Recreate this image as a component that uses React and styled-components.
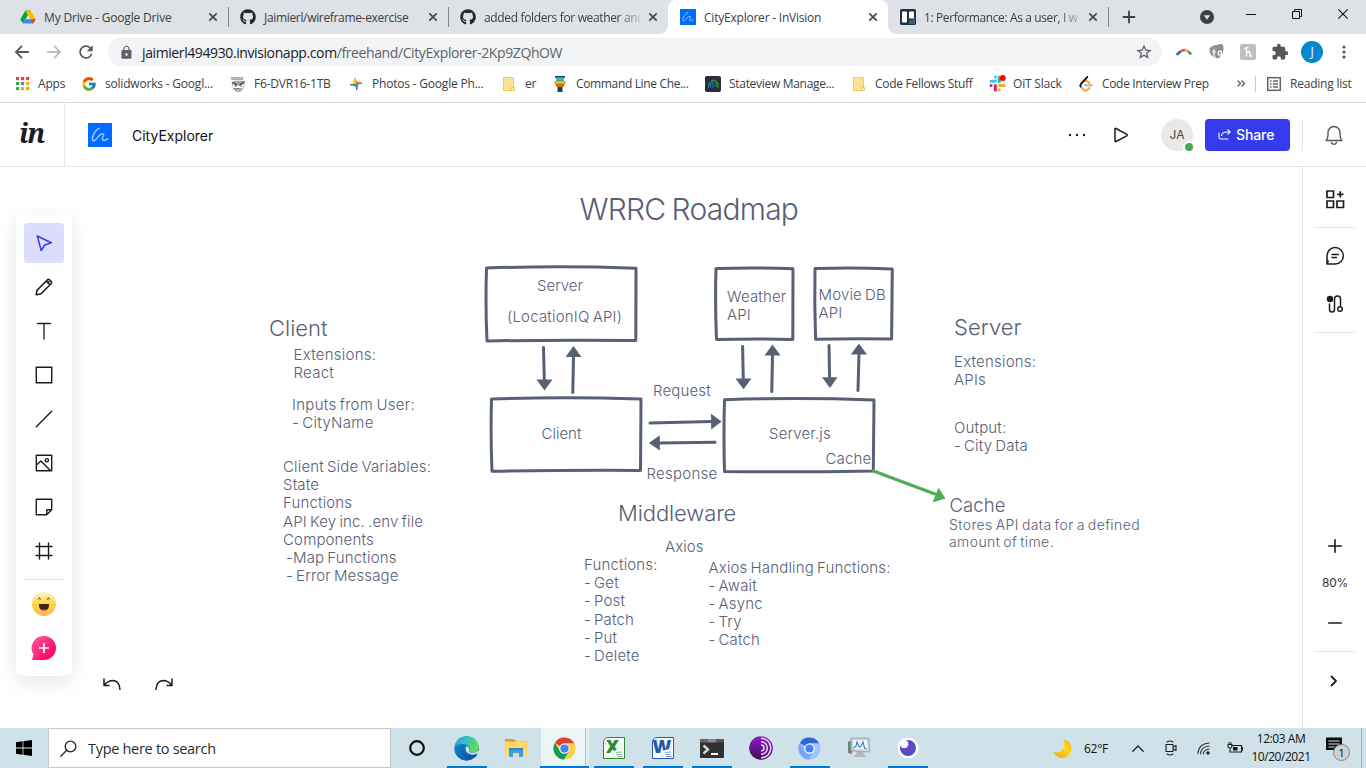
import React from "react";
import styled, { createGlobalStyle } from "styled-components";
import { FaGithub } from "react-icons/fa";
import { FcGoogle } from "react-icons/fc";
import { MdExtension, MdLock, MdRefresh, MdStarBorder } from "react-icons/md";

const UI = `"Open Sans", "Noto Sans", sans-serif`;
const INK = "#586075";

const Global = createGlobalStyle`
  * { box-sizing: border-box; }
  body { margin: 0; overflow: hidden; background: #fff; font-family: ${UI}; }
  svg { display: block; flex: none; overflow: visible; }
`;

const Screen = styled.div`
  width: 1366px;
  height: 768px;
  display: flex;
  flex-direction: column;
  background: #fff;
  overflow: hidden;
`;

/* ---------- browser chrome ---------- */
const TabStrip = styled.div`
  height: 34px;
  flex: none;
  display: flex;
  background: #dee1e6;
  padding-left: 8px;
`;

const Tab = styled.div`
  position: relative;
  width: 220px;
  height: 34px;
  padding: 0 7px 0 12px;
  display: flex;
  align-items: center;
  gap: 4px;
  border-radius: 8px 8px 0 0;
  background: ${(p) => (p.$active ? "#fff" : "transparent")};
  &::before, &::after {
    content: "";
    display: ${(p) => (p.$active ? "block" : "none")};
    position: absolute;
    bottom: 0;
    width: 8px;
    height: 8px;
  }
  &::before { left: -8px; background: radial-gradient(circle at 0 0, transparent 7.5px, #fff 8px); }
  &::after { right: -8px; background: radial-gradient(circle at 100% 0, transparent 7.5px, #fff 8px); }
`;

const TabTitle = styled.span`
  flex: 1;
  min-width: 0;
  margin-left: 4px;
  white-space: nowrap;
  font-size: 12px;
  letter-spacing: ${(p) => p.$ls || 0}px;
  color: #3c4043;
  ${(p) => p.$fade && "mask-image: linear-gradient(90deg, #000 86%, transparent 102%);"}
`;

const TabDivider = styled.i`
  width: 1px;
  height: 20px;
  margin: 7px -1px 0 0;
  background: #80868b;
`;

const NewTab = styled.div`
  display: flex;
  align-items: center;
  margin-left: 15px;
`;

const WindowControls = styled.div`
  display: flex;
  margin-left: auto;
  height: 28px;
  align-items: center;
  & > div { width: 46px; display: flex; justify-content: center; }
  & > div:first-child { width: 42px; padding-top: 5px; }
`;

const Toolbar = styled.div`
  height: 36px;
  flex: none;
  display: flex;
  align-items: center;
  padding-left: 6px;
`;

const ToolSlot = styled.div`
  width: 32px;
  display: flex;
  justify-content: center;
  align-items: center;
`;

const Omnibox = styled.div`
  width: 1054px;
  height: 28px;
  margin: 0 6px;
  padding: 0 9px 0 11px;
  border-radius: 14px;
  background: #f1f3f4;
  display: flex;
  align-items: center;
`;

const Url = styled.span`
  flex: 1;
  margin-left: 8px;
  font-size: 14px;
  letter-spacing: -0.4px;
  white-space: nowrap;
  color: #5f6368;
  b { font-weight: 400; color: #202124; }
`;

const ProfileDot = styled.div`
  width: 22px;
  height: 22px;
  border-radius: 50%;
  background: #0288d1;
  color: #fff;
  font-size: 12px;
  line-height: 21px;
  text-align: center;
`;

const BookmarkBar = styled.div`
  height: 33px;
  flex: none;
  display: flex;
  align-items: center;
  padding: 0 0 5px 14px;
  border-bottom: 1px solid #dadce0;
`;

const Bookmark = styled.div`
  width: ${(p) => p.$w}px;
  display: flex;
  align-items: center;
  gap: 8px;
  white-space: nowrap;
  font-size: 12px;
  letter-spacing: ${(p) => p.$ls || 0}px;
  color: #3c4043;
`;

const IconBox = styled.span`
  width: 16px;
  height: 16px;
  flex: none;
  display: flex;
  align-items: center;
  justify-content: center;
`;

const BookmarkDivider = styled.i`
  width: 1px;
  height: 16px;
  margin-right: 10px;
  background: #c8cacd;
`;

/* ---------- application ---------- */
const Header = styled.header`
  height: 64px;
  flex: none;
  display: flex;
  align-items: center;
  border-bottom: 1px solid #e6e6e6;
  font-family: Inter, sans-serif;
`;

const Brand = styled.div`
  width: 65px;
  height: 63px;
  padding: 0 0 4px 19px;
  display: flex;
  align-items: center;
  border-right: 1px solid #e6e6e6;
  font-family: "Noto Serif", "DejaVu Serif", serif;
  font-style: italic;
  font-weight: 700;
  font-size: 27px;
  letter-spacing: -1.2px;
  color: #1d1d27;
`;

const FileIcon = styled.div`
  margin-left: 23px;
`;

const FileName = styled.div`
  margin-left: 20px;
  padding-top: 2px;
  font-size: 14px;
  letter-spacing: 0;
  color: #111;
`;

const HeaderActions = styled.div`
  margin-left: auto;
  display: flex;
  align-items: center;
  height: 32px;
`;

const PlayButton = styled.div`
  margin-left: 28px;
`;

const Avatar = styled.div`
  position: relative;
  width: 32px;
  height: 32px;
  margin: 0 12px 0 33px;
  border-radius: 50%;
  background: #e9e9e9;
  color: #444;
  font-size: 12px;
  line-height: 32px;
  text-align: center;
`;

const Presence = styled.i`
  position: absolute;
  right: -2px;
  bottom: -2px;
  width: 12px;
  height: 12px;
  border-radius: 50%;
  border: 2px solid #fff;
  background: #43a94d;
`;

const ShareButton = styled.button`
  width: 85px;
  height: 32px;
  padding: 0 0 0 13px;
  border: 0;
  border-radius: 4px;
  background: #343bee;
  color: #fff;
  display: flex;
  align-items: center;
  gap: 5px;
  font: 500 14px Inter, sans-serif;
  letter-spacing: -0.1px;
`;

const BellSlot = styled.div`
  width: 64px;
  height: 32px;
  margin-left: 12px;
  padding-right: 2px;
  border-left: 1px solid #e6e6e6;
  display: flex;
  align-items: center;
  justify-content: center;
`;

const Main = styled.main`
  flex: 1;
  min-height: 0;
  display: flex;
`;

const Canvas = styled.section`
  position: relative;
  flex: 1;
  overflow: hidden;
`;

const Toolbox = styled.div`
  position: absolute;
  left: 16px;
  top: 48px;
  width: 56px;
  padding: 8px;
  display: flex;
  flex-direction: column;
  gap: 4px;
  border-radius: 6px;
  background: #fff;
  box-shadow: 0 6px 20px rgba(0, 0, 0, 0.1);
`;

const Tool = styled.div`
  width: 40px;
  height: 40px;
  border-radius: 4px;
  display: flex;
  align-items: center;
  justify-content: center;
  background: ${(p) => (p.$active ? "#dcdcfc" : "transparent")};
`;

const ToolRule = styled.i`
  height: 1px;
  margin: 4px 0 0;
  background: #e2e2e2;
`;

const History = styled.div`
  position: absolute;
  left: 102px;
  top: 510px;
  height: 13px;
  overflow: hidden;
  display: flex;
  gap: 32px;
  svg { overflow: hidden; }
`;

const Drawing = styled.svg`
  position: absolute;
  inset: 0;
`;

const Label = styled.div`
  position: absolute;
  left: ${(p) => p.$x}px;
  top: ${(p) => p.$y - 167}px;
  white-space: pre;
  font-family: Inter, sans-serif;
  font-weight: 300;
  font-size: ${(p) => p.$size || 15}px;
  line-height: ${(p) => p.$lh || 18.2}px;
  letter-spacing: ${(p) => p.$ls ?? 0.16}px;
  word-spacing: -1.3px;
  color: ${INK};
`;

const Rail = styled.aside`
  width: 64px;
  flex: none;
  border-left: 1px solid #e6e6e6;
  display: flex;
  flex-direction: column;
  align-items: center;
  padding: 8px 0 23px;
  font-family: Inter, sans-serif;
`;

const RailButton = styled.div`
  height: ${(p) => p.$h || 48}px;
  padding-right: ${(p) => p.$pr || 0}px;
  display: flex;
  align-items: center;
  justify-content: center;
`;

const RailRule = styled.i`
  width: 40px;
  height: 1px;
  background: #e2e2e2;
  margin: ${(p) => p.$m || "4px 0"};
`;

const ZoomValue = styled.div`
  height: 36px;
  padding: 12px 0 0 1px;
  line-height: 26px;
  font-size: 12px;
  letter-spacing: -0.2px;
  color: #333;
`;

const Spacer = styled.div`
  flex: 1;
`;

/* ---------- task bar ---------- */
const Taskbar = styled.footer`
  height: 40px;
  flex: none;
  display: flex;
  background: #d0e2e9;
`;

const StartButton = styled.div`
  width: 48px;
  display: flex;
  align-items: center;
  justify-content: center;
`;

const SearchBox = styled.div`
  width: 343px;
  height: 40px;
  padding-left: 11px;
  display: flex;
  align-items: center;
  gap: 11px;
  border: 1px solid #c5c9cb;
  background: #fff;
  font-size: 14.5px;
  letter-spacing: -0.3px;
  color: #2b2b2b;
`;

const TaskItem = styled.div`
  width: ${(p) => p.$w || 49}px;
  display: flex;
  align-items: center;
  justify-content: center;
  background: ${(p) =>
    p.$active
      ? "linear-gradient(90deg, transparent 1px, #edf4f6 1px 45px, #b4c6cd 45px 46px, #dfebef 46px)"
      : "none"};
  box-shadow: ${(p) => (p.$active ? "inset 0 -2px #0078d7" : "none")};
  &::after {
    content: "";
    display: ${(p) => (p.$open ? "block" : "none")};
    width: 40px;
    height: 2px;
    margin: 38px -40px 0 ${(p) => -(40 + (p.$icon || 24)) / 2}px;
    margin-right: ${(p) => ((p.$icon || 24) - 40) / 2}px;
    background: #0078d7;
  }
`;

const Tray = styled.div`
  margin-left: auto;
  display: flex;
  align-items: center;
  color: #111;
  font-size: 12px;
`;

const TraySlot = styled.div`
  width: ${(p) => p.$w}px;
  display: flex;
  align-items: center;
  justify-content: center;
  white-space: nowrap;
  letter-spacing: -0.3px;
`;

const Clock = styled.div`
  width: 66px;
  text-align: center;
  line-height: 18px;
  letter-spacing: -0.45px;
  padding-bottom: 1px;
`;

const DesktopEdge = styled.i`
  width: 5px;
  height: 40px;
  border-left: 1px solid #9fb0b7;
`;

/* ---------- icons ---------- */
const CloseX = ({ size = 8, w = 1.7, c = "#45494d" }) => (
  <svg width={size} height={size} viewBox="0 0 8 8">
    <path d="M.3 .3 7.7 7.7M7.7 .3.3 7.7" stroke={c} strokeWidth={w} />
  </svg>
);

const DriveIcon = () => (
  <svg width="16" height="16" viewBox="0 0 16 16">
    <path d="M5.4 1.4h5.2L8 5.9z" fill="#188038" />
    <path d="M5.4 1.4 0.3 10.2l2.6 4.4L8 5.9z" fill="#00ac47" />
    <path d="M10.6 1.4 15.7 10.2h-5.2L5.4 1.4z" fill="#ffba00" />
    <path d="M5.5 10.2h10.2l-2.6 4.4H2.9z" fill="#4285f4" />
    <path d="M10.5 10.2h5.2l-2.6 4.4z" fill="#ea4335" />
  </svg>
);

const FreehandIcon = ({ size }) => (
  <svg width={size} height={size} viewBox="0 0 24 24">
    <path d="M0 0h24v24H0z" fill="#006cff" />
    <path
      d="M11.300 5.300C7.500 6.500 3.800 13 4.500 16.800c.6 2.200 2.800.6 5-2.200 2-2.700 4.700-4.600 6-3.300 1 1.200-1.900 3.700-1 5.300.8 1.300 3.500.6 5.300-.7"
      fill="none"
      stroke="#9fc8ff"
      strokeWidth="1.500"
      strokeLinecap="round"
      strokeLinejoin="round"
    />
  </svg>
);

const TrelloIcon = () => (
  <svg width="16" height="16" viewBox="0 0 16 16">
    <rect width="16" height="16" rx="1.500" fill="#1c3347" />
    <path d="M9 12l6-3v6H9z" fill="#3d6074" />
    <rect x="2" y="2.500" width="5" height="11" rx=".7" fill="#fff" />
    <rect x="9" y="2.500" width="5" height="7" rx=".7" fill="#fff" />
  </svg>
);

const Arrow = ({ back, c }) => (
  <svg width="14" height="14" viewBox="0 0 14 14" fill="none" stroke={c} strokeWidth="1.800">
    <path d={back ? "M13.800 7H1.500M7 .8.9 7 7 13.200" : "M.2 7h12.300M7 .8 13.100 7 7 13.200"} />
  </svg>
);

const AppsIcon = () => (
  <svg width="13" height="13" viewBox="0 0 13 13">
    {["#ea4335", "#ea4335", "#ea4335", "#34a853", "#4285f4", "#f9ab00", "#34a853", "#f9ab00", "#f9ab00"].map((c, i) => (
      <rect key={i} x={(i % 3) * 5} y={Math.floor(i / 3) * 5} width="3.200" height="3.200" fill={c} />
    ))}
  </svg>
);

const DvrIcon = () => (
  <svg width="16" height="16" viewBox="0 0 16 16">
    <path d="M1 1h12.500v3H1z" fill="#c4c4c4" />
    <path d="M1 1.800h12.500M2 3.600h11" stroke="#888" strokeWidth=".7" strokeDasharray="1.500 1" />
    <path d="M1.500 6 5 4.700h6L15 5l-1 7-4 4H7l-4-3z" fill="#a5a5a5" />
    <path d="M3 8l4 1.500h2L14 8l-1 4-3 1-2 2-2-2-3-1z" fill="#fff" />
    <path d="M2.500 6.500 7 9.200M14 6 9.500 9.200" stroke="#333" strokeWidth="1.200" fill="none" />
    <path d="M4.500 13l1-1 1.200 1.500L8 12l1.200 1.500 1.300-1.500" stroke="#444" strokeWidth=".9" fill="none" />
    <circle cx="5.500" cy="10" r=".8" fill="#a33" />
    <circle cx="11" cy="10" r=".8" fill="#a33" />
  </svg>
);

const PhotosIcon = () => (
  <svg width="16" height="16" viewBox="0 0 16 16">
    <path d="M8 1v7H4.500Q7 6.500 6 3.500z" fill="#fbbc04" />
    <path d="M15 8H8V4.500Q9.500 7 12.500 6z" fill="#ea4335" />
    <path d="M8 15V8h3.500Q9 9.500 10 12.500z" fill="#4285f4" />
    <path d="M1 8h7v3.500Q6.500 9 3.500 10z" fill="#34a853" />
    <path d="M8 1.200 4.500 4.500V8H8zM14.800 8 11.500 4.500H8V8z" fill="#fbbc04" opacity=".35" />
  </svg>
);

const FolderMark = () => (
  <svg width="12" height="14" viewBox="0 0 12 14">
    <path d="M.5.5h10v9l1 1v3H.5z" fill="#fde293" stroke="#f2cc60" />
    <path d="M8.500 13.500v-3h3" fill="#fff1bd" stroke="#e9bd49" strokeWidth=".8" />
  </svg>
);

const TowerIcon = () => (
  <svg width="12" height="16" viewBox="0 0 12 16">
    <path d="M1 0h10v1.800H1z" fill="#0b5b72" />
    <path d="M2 1.800h8v3H2z" fill="#178a94" />
    <path d="M2 3h8" stroke="#bfe" strokeWidth=".7" />
    <path d="M0 5h12v2.500H0z" fill="#f2b51c" />
    <path d="M1 7.500h10L9.500 11h-7z" fill="#b87b08" />
    <path d="M3.500 11h5v5h-5z" fill="#0d4770" />
  </svg>
);

const StateviewIcon = () => (
  <svg width="16" height="16" viewBox="0 0 16 16" fill="none">
    <rect width="16" height="16" rx="2" fill="#2a2d3a" />
    <path d="M3.500 11.500V9q0-2 2-2.500V11.500M6 6q2-1 2 1v4.500" stroke="#2277b5" strokeWidth="1.200" />
    <path d="M6 5q4-2 5 1v5M10 5.500q3 0 3 3v3.500" stroke="#28a428" strokeWidth="1.200" />
  </svg>
);

const SlackIcon = () => (
  <svg width="17" height="17" viewBox="0 0 17 17" strokeWidth="3" strokeLinecap="round">
    <path d="M2 6.200h4.500M6.400 2v.1" stroke="#36c5f0" />
    <path d="M10.400 2v4.500" stroke="#2eb67d" />
    <path d="M10.500 10.400H15M10.400 14.800v-.1" stroke="#ecb22e" />
    <path d="M6.300 10.400v4.500M2 10.400h.1" stroke="#e01e5a" />
    <circle cx="13.800" cy="3" r="2.900" fill="#f00" />
  </svg>
);

const LeetIcon = () => (
  <svg width="14" height="16" viewBox="0 0 14 16" fill="none" strokeLinecap="round" strokeWidth="1.900">
    <path d="M2 8Q1 9.500 2 11l2.500 2.800q2 1.700 4 0L10.500 12" stroke="#ffa116" />
    <path d="M4.700 5.300q2-1.500 3.500 0L10.500 7" stroke="#ffa116" />
    <path d="M8.300 1 1.800 8.200Q1 9.300 1.600 10.500" stroke="#1a1a1a" />
    <path d="M6 9.300h7" stroke="#b3b3b3" />
  </svg>
);

const ReadingIcon = () => (
  <svg width="14" height="14" viewBox="0 0 14 14" fill="none" stroke="#5f6368" strokeWidth="1.500">
    <rect x=".7" y=".7" width="12.600" height="12.600" />
    <path d="M3 4h1.500M3 7h1.500M3 10h1.500M6 4h5M6 7h5M6 10h5" />
  </svg>
);

const S = (p) => (
  <svg width={p.s || 18} height={p.h || p.s || 18} viewBox={`0 0 ${p.s || 18} ${p.h || p.s || 18}`} fill="none" stroke={p.c || "#1d1d1f"} strokeWidth={p.w || 1.4} strokeLinecap="round" strokeLinejoin="round">
    {p.children}
  </svg>
);

const Emoji = () => (
  <svg width="24" height="24" viewBox="0 0 24 24">
    <defs>
      <linearGradient id="face" x1="0" y1="0" x2="0" y2="1">
        <stop offset="0" stopColor="#fff3cf" />
        <stop offset=".5" stopColor="#ffd43b" />
        <stop offset="1" stopColor="#ffb36b" />
      </linearGradient>
    </defs>
    <circle cx="12" cy="12" r="12" fill="url(#face)" />
    <path d="M6.300 7.500 7.400 5.700 8.500 7.500M15.300 7.500l1.100-1.800 1.100 1.800" stroke="#5d4218" strokeWidth="1" fill="none" />
    <path d="M7 12h10q.3 6.500-5 6.500T7 12z" fill="#3d2610" />
    <path d="M9.500 17.800q2.500-1.800 5 0-2.500 1.400-5 0z" fill="#f0156e" />
  </svg>
);

const PinkBubble = () => (
  <svg width="24" height="24" viewBox="0 0 24 24">
    <defs>
      <linearGradient id="pink" x1="0" y1="0" x2="1" y2="1">
        <stop offset="0" stopColor="#ff5fa3" />
        <stop offset=".75" stopColor="#fb0b6a" />
      </linearGradient>
    </defs>
    <path d="M12 0a12 12 0 1 1 0 24H0l1.500-5.500A12 12 0 0 1 12 0z" fill="url(#pink)" />
    <path d="M12 7v10M7 12h10" stroke="#fff" strokeWidth="1.600" />
  </svg>
);

const ChromeIcon = ({ mono, size = 23 }) => {
  const [r, g, y] = mono ? ["#2f63d6", "#77a6f7", "#a3c4fb"] : ["#db4437", "#0f9d58", "#ffcd40"];
  return (
    <svg width={size} height={size} viewBox="0 0 24 24">
      <circle cx="12" cy="12" r="11.500" fill={y} />
      <path d="M12 12 2 6.200A11.500 11.500 0 0 1 22 6.500H12z" fill={r} />
      <path d="M2 6.200A11.500 11.500 0 0 0 11.500 23.500L16.800 14.700 12 12 7.200 14.700z" fill={g} />
      <circle cx="12" cy="12" r="5.500" fill={mono ? "#fff" : "#f1f1f1"} />
      <circle cx="12" cy="12" r="4.300" fill="#4285f4" />
    </svg>
  );
};

const EdgeIcon = () => (
  <svg width="25" height="25" viewBox="0 0 24 24">
    <defs>
      <linearGradient id="edgeTop" x1="0" y1="0" x2="1" y2=".4">
        <stop offset="0" stopColor="#249fe0" />
        <stop offset=".5" stopColor="#2fc2c6" />
        <stop offset="1" stopColor="#65dc52" />
      </linearGradient>
      <linearGradient id="edgeLow" x1="0" y1="0" x2="1" y2="1">
        <stop offset="0" stopColor="#1593df" />
        <stop offset="1" stopColor="#0b4d98" />
      </linearGradient>
    </defs>
    <circle cx="12" cy="12" r="11.700" fill="url(#edgeLow)" />
    <path d="M.5 10.500C1.500 4 6.500.3 12 .3c7 0 11.800 4.700 11.700 10 0 4-3 5.800-6 5.800-2.500 0-3.700-.8-3.500-1.700 1.300-1 1.300-5.400-3.700-6.400C6 7 2 8 .5 10.500z" fill="url(#edgeTop)" />
    <path d="M10 8.500c-3 1.800-3 7 .5 9.800 3 2.300 7.500 2.200 12 -.8-.6 1-1.200 1.800-2 2.500C14 22.500 7 20 7 14c0-3 1.500-5 3-5.500z" fill="#0c3f8a" opacity=".55" />
    <path d="M12 9.500c2.300.6 3.200 3.200 2.200 4.900-.3 1 1 1.700 3.500 1.700 2.300 0 4.300-.9 5.500-2.500.6 1.300.3 2.500-.4 3.300-4 2-9 1-10.800-1.700-1-1.500-1.200-4 0-5.700z" fill="#d0e2e9" />
  </svg>
);

const ExplorerIcon = () => (
  <svg width="22" height="20" viewBox="0 0 22 20">
    <path d="M0 1h9l2 2h11v15H0z" fill="#f5b50a" />
    <path d="M0 3.500h22V18H0z" fill="#ffd667" />
    <path d="M0 3.500h10l1-1.500H9L8 1H0z" fill="#e09f0b" />
    <path d="M4 10h14v9h-4v-4H8v4H4z" fill="#3d9de0" />
    <path d="M4 10h14v2H4z" fill="#2b86cb" />
  </svg>
);

const Sheet = styled.div`
  position: relative;
  width: 22px;
  height: 22px;
  border: 1px solid ${(p) => p.$c};
  border-top-left-radius: 5px;
  background: linear-gradient(135deg, ${(p) => p.$tint}, #fff 45%, ${(p) => p.$tint});
  box-shadow: inset 0 0 0 1px #fff;
  color: ${(p) => p.$c};
  font: 800 18px/17px ${UI};
  padding-right: 2px;
  text-align: center;
  & > svg { position: absolute; right: 0; bottom: 0; }
`;

const OfficeIcon = ({ letter, c, tint }) => (
  <Sheet $c={c} $tint={tint}>
    {letter}
    <svg width="11" height="9" viewBox="0 0 11 9">
      <path d="M0 2 7 0l4 2v7H3z" fill="#fff" />
      <path d="M3 3.500 9 3M3 5.500h6M4 7.500h6" stroke={c} strokeWidth=".6" />
    </svg>
  </Sheet>
);

const TerminalIcon = () => (
  <svg width="24" height="19" viewBox="0 0 24 19">
    <rect width="24" height="19" rx="1" fill="#303030" />
    <path d="M0 1q0-1 1-1h7v3.500H0z" fill="#686868" />
    <path d="M8 0h8v3.500H8z" fill="#8a8a8a" />
    <path d="M16 0h7q1 0 1 1v2.500h-8z" fill="#555" />
    <path d="M3.500 6.500 8 10.500l-4.500 4" stroke="#d4d4d4" strokeWidth="2.400" fill="none" />
    <path d="M11 15h7" stroke="#fff" strokeWidth="2" />
  </svg>
);

const TorIcon = () => (
  <svg width="24" height="24" viewBox="0 0 24 24" fill="none">
    <defs>
      <linearGradient id="tor" x1="0" y1="0" x2="0" y2="1">
        <stop offset="0" stopColor="#8e1bc6" />
        <stop offset="1" stopColor="#420c5d" />
      </linearGradient>
    </defs>
    <circle cx="12" cy="12" r="11.800" fill="url(#tor)" />
    <path d="M12 2.200a9.800 9.800 0 0 1 0 19.600M12 5.700a6.300 6.300 0 0 1 0 12.600M12 9a3 3 0 0 1 0 6" stroke="#ecd6f7" strokeWidth="1.500" />
  </svg>
);

const MonitorIcon = () => (
  <svg width="24" height="22" viewBox="0 0 24 22">
    <path d="M1 5 5 3v14l-4-1z" fill="#777f83" />
    <path d="M1 7h3M1 9h3" stroke="#39b54a" />
    <path d="M4 1h18l1 14-19-1z" fill="#c9cdcf" stroke="#8d9498" strokeWidth=".6" />
    <path d="M6 3h14l.7 10L6 12z" fill="#eaf5fc" />
    <path d="M6.500 11 9 9l1-4 2 5 2-1 2-4 1.500 6 2 1" stroke="#2f86bd" strokeWidth="1.100" fill="none" />
    <path d="M10 15h6l3 5H7z" fill="#b1b6b8" />
  </svg>
);

const EyeIcon = () => (
  <svg width="22" height="22" viewBox="0 0 22 22">
    <circle cx="11" cy="11" r="10.500" fill="#fff" />
    <circle cx="11" cy="11" r="8" fill="#5a4ac4" />
    <circle cx="7.200" cy="7" r="4.200" fill="#fff" />
  </svg>
);

/* ---------- diagram ---------- */
const boxes = [
  "M486.500 268Q561 265.500 636 268.300 L635.800 340.500 Q560 339.600 487 341 Q485.300 305 486.500 268Z",
  "M716 268.600 Q755 267.300 793 268.800 L792.800 339.400 Q755 338.400 716.500 339.500 Q715 305 716 268.600Z",
  "M815 268.600 Q852 267.300 892.300 268.900 L891.600 339 Q854 338.300 815.600 339.200 Q814.300 304 815 268.600Z",
  "M491.500 399 Q562 396.500 641 399 L640.500 470.400 Q565 470 492 471.200 Q490.500 437 491.500 399Z",
  "M724.500 399.700 Q798 397.300 874 400 L873.300 471 Q800 472.300 724.500 471.600 Q723.500 436 724.500 399.700Z",
];

const arrows = [
  { line: "M543.500 347.500 544.300 381", head: "M536.500 379.500H552.500L544.500 390.500Z" },
  { line: "M572.800 392.500 573.500 355", head: "M565.500 357H581.500L573.500 346Z" },
  { line: "M742.600 346.500 743.300 380", head: "M735.500 378.500H751.500L743.500 389.300Z" },
  { line: "M771.800 391.500 772.500 354", head: "M764.500 355.500H780.500L772.500 344.500Z" },
  { line: "M829 345.500 829.600 379", head: "M822 377.200H837.500L830 388Z" },
  { line: "M858 390.500 859 353", head: "M850.800 354.500H867L859 343.500Z" },
  { line: "M650 423 712 421.600", head: "M711 413.800 721.700 421.400 711.200 429.500Z" },
  { line: "M715 442.200 658 443", head: "M659.800 435.200V450.500L649 443Z" },
];

const Diagram = () => (
  <Drawing width="1302" height="561" viewBox="0 167 1302 561" fill="none">
    <g stroke={INK} strokeWidth="3" strokeLinejoin="round" strokeLinecap="round">
      {boxes.map((d) => <path key={d} d={d} />)}
      {arrows.map((a) => <path key={a.line} d={a.line} />)}
    </g>
    <g fill={INK}>
      {arrows.map((a) => <path key={a.head} d={a.head} />)}
    </g>
    <path d="M873.500 471 935 494" stroke="#4caf50" strokeWidth="3" strokeLinecap="round" />
    <path d="M938.500 487.800 945.500 498.600 932.500 502.600Z" fill="#4caf50" />
  </Drawing>
);

const labels = [
  { x: 579.5, y: 191, size: 30, lh: 36, ls: -0.78, t: "WRRC Roadmap" },
  { x: 269, y: 314, size: 22, lh: 28, ls: 0, t: "Client" },
  { x: 293.5, y: 346, ls: 0.25, t: "Extensions:\nReact" },
  { x: 292, y: 395.5, ls: 0.3, t: "Inputs from User:\n- CityName" },
  { x: 283, y: 458, t: "Client Side Variables:\nState\nFunctions\nAPI Key inc. .env file\nComponents\n -Map Functions\n - Error Message" },
  { x: 537, y: 276.5, ls: 0, t: "Server" },
  { x: 507, y: 308, ls: 0.2, t: "(LocationIQ API)" },
  { x: 727, y: 288, t: "Weather\nAPI" },
  { x: 818.5, y: 286, t: "Movie DB\nAPI" },
  { x: 653, y: 382, t: "Request" },
  { x: 541.5, y: 424.5, ls: 0, t: "Client" },
  { x: 769, y: 425, t: "Server.js" },
  { x: 825.5, y: 450, t: "Cache" },
  { x: 646.5, y: 464.5, ls: 0.25, t: "Response" },
  { x: 618, y: 499, size: 22, lh: 28, ls: -0.1, t: "Middleware" },
  { x: 665, y: 537.5, ls: 0.05, t: "Axios" },
  { x: 584, y: 556, t: "Functions:\n- Get\n- Post\n- Patch\n- Put\n- Delete" },
  { x: 708.5, y: 558.5, t: "Axios Handling Functions:\n- Await\n- Async\n- Try\n- Catch" },
  { x: 954, y: 312.5, size: 22, lh: 28, ls: 0, t: "Server" },
  { x: 954, y: 353, ls: 0.2, t: "Extensions:\nAPIs" },
  { x: 954, y: 419, t: "Output:\n- City Data" },
  { x: 949.5, y: 491.5, size: 18.5, lh: 26, ls: 0.1, t: "Cache" },
  { x: 949, y: 516, size: 14, lh: 17, ls: 0.4, t: "Stores API data for a defined\namount of time." },
];

const tabs = [
  { icon: <DriveIcon />, t: "My Drive - Google Drive", ls: -0.16, div: true },
  { icon: <FaGithub size={16} color="#24292e" />, t: "Jaimierl/wireframe-exercise", ls: -0.33, div: true },
  { icon: <FaGithub size={16} color="#24292e" />, t: "added folders for weather and", ls: -0.35, fade: true },
  { icon: <FreehandIcon size={16} />, t: "CityExplorer - InVision", ls: -0.22, active: true },
  { icon: <TrelloIcon />, t: "1: Performance: As a user, I w", ls: -0.38, fade: true, div: true },
];

const bookmarks = [
  { w: 67, icon: <AppsIcon />, t: "Apps" },
  { w: 149, icon: <FcGoogle size={16} />, t: "solidworks - Googl..." },
  { w: 118, icon: <DvrIcon />, t: "F6-DVR16-1TB" },
  { w: 153, icon: <PhotosIcon />, t: "Photos - Google Ph..." },
  { w: 51, icon: <FolderMark />, t: "er" },
  { w: 153, icon: <TowerIcon />, t: "Command Line Che...", ls: -0.35 },
  { w: 146, icon: <StateviewIcon />, t: "Stateview Manage...", ls: -0.3 },
  { w: 138, icon: <FolderMark />, t: "Code Fellows Stuff", ls: -0.28 },
  { w: 89, icon: <SlackIcon />, t: "OiT Slack" },
  { w: 159, icon: <LeetIcon />, t: "Code Interview Prep", ls: -0.33 },
];

export default function App() {
  return (
    <Screen>
      <Global />
      <TabStrip>
        {tabs.map((tab) => (
          <React.Fragment key={tab.t}>
            <Tab $active={tab.active}>
              <IconBox>{tab.icon}</IconBox>
              <TabTitle $ls={tab.ls} $fade={tab.fade}>{tab.t}</TabTitle>
              <IconBox><CloseX /></IconBox>
            </Tab>
            {tab.div && <TabDivider />}
          </React.Fragment>
        ))}
        <NewTab>
          <S s={12} w={1.8} c="#3c4043"><path d="M6 .5v11M.5 6h11" /></S>
        </NewTab>
        <WindowControls>
          <div>
            <svg width="14" height="14" viewBox="0 0 14 14">
              <circle cx="7" cy="7" r="7" fill="#3c4043" />
              <path d="M3.800 5.300h6.400L7 9.800z" fill="#dee1e6" />
            </svg>
          </div>
          <div><svg width="10" height="1"><path d="M0 .5h10" stroke="#111" /></svg></div>
          <div>
            <svg width="10" height="10" fill="none" stroke="#111">
              <path d="M.5 2.500h7v7h-7zM2.500 2.500v-2h7v7h-2" />
            </svg>
          </div>
          <div><CloseX size={10} w={0.9} c="#111" /></div>
        </WindowControls>
      </TabStrip>

      <Toolbar>
        <ToolSlot><Arrow back c="#54585c" /></ToolSlot>
        <ToolSlot><Arrow c="#babcbe" /></ToolSlot>
        <ToolSlot><MdRefresh size={20} color="#54585c" /></ToolSlot>
        <Omnibox>
          <MdLock size={15} color="#5f6368" />
          <Url><b>jaimierl494930.invisionapp.com</b>/freehand/CityExplorer-2Kp9ZQhOW</Url>
          <MdStarBorder size={18} color="#54585c" />
        </Omnibox>
        <ToolSlot>
          <svg width="16" height="8" viewBox="0 0 16 8" fill="none" strokeWidth="2.600">
            <path d="M.8 7Q2.500 4.500 5 3.300" stroke="#2b64b8" />
            <path d="M5 3.300Q6.500 2 9 2" stroke="#e34b3a" />
            <path d="M8.500 2q2 0 4 1.500" stroke="#f4a12c" />
            <path d="M12.300 3.500q1.500 1 2.800 3" stroke="#2e9d57" />
          </svg>
        </ToolSlot>
        <ToolSlot>
          <svg width="15" height="16" viewBox="0 0 15 16">
            <path d="M1 9C-1 3 4 1 8 1q4-2 6 0 2 8-4 13-6 1-9-5z" fill="#8f9092" />
            <path d="M5 5v7q0 1.500 1.500 1M3 8h4M9.500 11Q8.500 8 10.500 7q2-.3 2 2t-3 2M12.500 7v5q-.5 3-2.500 2" stroke="#fff" strokeWidth="1.200" fill="none" />
          </svg>
        </ToolSlot>
        <ToolSlot>
          <svg width="16" height="16" viewBox="0 0 16 16" fill="none">
            <rect width="16" height="16" rx="2" fill="#bfbfbf" />
            <path d="M6.500 3v9.500M4.300 4.800 8.500 3.500M6.500 9Q9.500 6 9.800 8.500V12q.7.800 2-.5" stroke="#fff" strokeWidth="1.400" />
          </svg>
        </ToolSlot>
        <ToolSlot><MdExtension size={18} color="#54585c" /></ToolSlot>
        <ToolSlot><ProfileDot>J</ProfileDot></ToolSlot>
        <ToolSlot>
          <svg width="4" height="14" fill="#54585c"><circle cx="2" cy="2" r="1.600" /><circle cx="2" cy="7" r="1.600" /><circle cx="2" cy="12" r="1.600" /></svg>
        </ToolSlot>
      </Toolbar>

      <BookmarkBar>
        {bookmarks.map((b, i) => (
          <Bookmark key={i} $w={b.w} $ls={b.ls || -0.2}><IconBox>{b.icon}</IconBox>{b.t}</Bookmark>
        ))}
        <Bookmark $w={18}>
          <svg width="8" height="7" viewBox="0 0 8 7" fill="none" stroke="#5f6368" strokeWidth="1.400"><path d="M.5.5l3 3-3 3M4.500.5l3 3-3 3" /></svg>
        </Bookmark>
        <BookmarkDivider />
        <Bookmark $w={90} $ls={-0.22}><IconBox><ReadingIcon /></IconBox>Reading list</Bookmark>
      </BookmarkBar>

      <Header>
        <Brand>in</Brand>
        <FileIcon><FreehandIcon size={24} /></FileIcon>
        <FileName>CityExplorer</FileName>
        <HeaderActions>
          <svg width="18" height="4" fill="#1d1d1f"><circle cx="2" cy="2" r="1.200" /><circle cx="9" cy="2" r="1.200" /><circle cx="16" cy="2" r="1.200" /></svg>
          <PlayButton>
            <svg width="14" height="16" viewBox="0 0 14 16" fill="none" stroke="#1d1d1f" strokeWidth="1.500" strokeLinejoin="round">
              <path d="M1 2.200v11.600q0 1.200 1 .7L12.800 8.800q.9-.8 0-1.500L2 1.500Q1 1 1 2.200z" />
            </svg>
          </PlayButton>
          <Avatar>JA<Presence /></Avatar>
          <ShareButton>
            <svg width="13" height="11" viewBox="0 0 13 11" fill="none" stroke="#fff" strokeWidth="1.100" strokeLinecap="round" strokeLinejoin="round">
              <path d="M1 4v4.500q0 1.500 1.500 1.500H10M3.500 6.500Q4.500 3 8.500 3H12M9.800.8 12.200 3 9.800 5.200" />
            </svg>
            Share
          </ShareButton>
          <BellSlot>
            <S s={18} h={20} w={1.4} c="#55565a">
              <path d="M1 15.500Q3 13.500 3 10V7.500a6 6 0 0 1 12 0V10q0 3.500 2 5.500zM6.500 17.500a2.600 2.600 0 0 0 5 0" />
            </S>
          </BellSlot>
        </HeaderActions>
      </Header>

      <Main>
        <Canvas>
          <Diagram />
          {labels.map((l, i) => (
            <Label key={i} $x={l.x} $y={l.y} $size={l.size} $lh={l.lh} $ls={l.ls}>{l.t}</Label>
          ))}
          <Toolbox>
            <Tool $active><S c="#343bee" w={1.5}><path d="M2.300 2 16.300 8.700 9.700 11 6.200 16.500z" /></S></Tool>
            <Tool><S w={1.6}><path d="M1.200 16.800 2 12.200 12.500 1.700q1-.9 2 0l1.800 1.800q.8 1 0 2L5.800 16zM11.300 3l3.800 3.800M12.800 4.800 14 3.500" /></S></Tool>
            <Tool><S w={1.3}><path d="M2.500 1.500h13M9 1.500v15.500" /></S></Tool>
            <Tool><S w={1.4}><path d="M1.300 1.300h15.400v15.400H1.300z" strokeLinejoin="miter" /></S></Tool>
            <Tool><S w={1.4}><path d="M1.300 16.700 16.700 1.300" /></S></Tool>
            <Tool><S w={1.4}><path d="M1.300 1.300h15.400v15.400H1.300zM1.500 11l4.300-4L15.500 16.500M10.300 6.200a1.600 1.600 0 1 0 3.200 0 1.600 1.600 0 1 0-3.200 0" /></S></Tool>
            <Tool><S w={1.4}><path d="M1.300 1.300h15.400v10.500L11.800 16.700H1.300zM11.800 16.700v-4.900h4.900" /></S></Tool>
            <Tool><S w={1.4}><path d="M4.500 1v16M13.500 1v16M1 4.500h16M1 13.500h16" /></S></Tool>
            <ToolRule />
            <Tool><Emoji /></Tool>
            <Tool><PinkBubble /></Tool>
          </Toolbox>
          <History>
            <S s={20} w={1.5}><path d="M2 2v6.500h5M2.500 8Q6 3.500 11 3.500q6.500.5 7 9" /></S>
            <S s={20} w={1.5}><path d="M18 2v6.500h-5M17.500 8Q14 3.500 9 3.500q-6.500.5-7 9" /></S>
          </History>
        </Canvas>
        <Rail>
          <RailButton>
            <S w={1.7}><path d="M1 1h6.500v6.500H1zM1 11h6.500v6.500H1zM11 11h6.500v6.500H11zM14.300 1.800v5M11.800 4.300h5" strokeLinejoin="miter" /></S>
          </RailButton>
          <RailRule />
          <RailButton>
            <S w={1.5}><path d="M1 17V9a8.200 8.200 0 1 1 8.200 8H1l1.200-3M6 7.500h6.500M6 10.500h4.500" /></S>
          </RailButton>
          <RailButton>
            <S w={1.5}>
              <circle cx="4" cy="4" r="2.500" fill="#1d1d1f" />
              <path d="M3.500 9v5.500a2.500 2.500 0 0 0 5 0V4a3 3 0 0 1 6 0v6.500" />
              <circle cx="14" cy="14" r="2.300" />
            </S>
          </RailButton>
          <RailRule />
          <Spacer />
          <RailButton $h={24}><S s={14} w={1.6}><path d="M7 .7v12.600M.7 7h12.600" /></S></RailButton>
          <ZoomValue>80%</ZoomValue>
          <RailButton $h={57}><S s={14} w={1.6}><path d="M.7 7h12.600" /></S></RailButton>
          <RailRule $m="0 0 5px" />
          <RailButton $h={48} $pr={1}><S s={8} h={12} w={1.8}><path d="M1.500 1.500 6 6l-4.500 4.500" /></S></RailButton>
        </Rail>
      </Main>

      <Taskbar>
        <StartButton>
          <svg width="16" height="16" viewBox="0 0 16 16"><path d="M0 2.300 6.600 1.300v6.200H0zM7.400 1.200 16 0v7.500H7.400zM0 8.400h6.600v6.300L0 13.700zM7.400 8.400H16V16L7.400 14.800z" /></svg>
        </StartButton>
        <SearchBox>
          <S s={17} w={1.3} c="#222"><circle cx="10.500" cy="6.500" r="5.300" /><path d="M6.700 10.300.8 16.200" /></S>
          Type here to search
        </SearchBox>
        <TaskItem $w={51}><svg width="16" height="16"><circle cx="8" cy="8" r="6.800" fill="none" stroke="#111" strokeWidth="2.200" /></svg></TaskItem>
        <TaskItem $open $icon={25}><EdgeIcon /></TaskItem>
        <TaskItem><ExplorerIcon /></TaskItem>
        <TaskItem $active><ChromeIcon /></TaskItem>
        <TaskItem $open $icon={22}><OfficeIcon letter="X" c="#2b8a35" tint="#cfe8c8" /></TaskItem>
        <TaskItem $open $icon={22}><OfficeIcon letter="W" c="#2259a8" tint="#c9dbf2" /></TaskItem>
        <TaskItem $open><TerminalIcon /></TaskItem>
        <TaskItem><TorIcon /></TaskItem>
        <TaskItem $open $icon={23}><ChromeIcon mono /></TaskItem>
        <TaskItem><MonitorIcon /></TaskItem>
        <TaskItem $open $icon={22}><EyeIcon /></TaskItem>
        <Tray>
          <TraySlot $w={26}>
            <svg width="19" height="19" viewBox="0 0 19 19">
              <defs><linearGradient id="moon" x1="0" y1="1" x2="1" y2="0"><stop offset="0" stopColor="#f79a10" /><stop offset=".6" stopColor="#ffd91a" /><stop offset="1" stopColor="#f4a020" /></linearGradient></defs>
              <path d="M11 .5A9.300 9.300 0 1 1 .5 13Q8 15 10.500 9 12 4.500 11 .5z" fill="url(#moon)" />
            </svg>
          </TraySlot>
          <TraySlot $w={42}>62°F</TraySlot>
          <TraySlot $w={41}><S s={12} h={7} w={1.3}><path d="M.8 6.200 6 1l5.200 5.200" /></S></TraySlot>
          <TraySlot $w={25}>
            <S s={12} h={16} w={1.1}><path d="M1 4.500h7v7H1zM8 7l3-1.500v5L8 9M2 2Q5 0 8 2M2 14q3 2 6 0" /></S>
          </TraySlot>
          <TraySlot $w={40}>
            <S s={13} h={13} w={1.1} c="#333"><path d="M.8 11.500Q1.500 2 12 1M3.500 11.800Q4 5 12 4M6.300 12Q6.500 8 12 7" /><circle cx="11" cy="11" r="1.200" fill="#111" /></S>
          </TraySlot>
          <TraySlot $w={23}>
            <S s={16} h={12} w={1.1}><path d="M4.500 3.500h10v6.500H6M15.500 5.500v2.500M1 2.500h4v2q0 1.500-2 1.500T1 4.500zM2 .5v2M4 .5v2M3 6v4h2" /><path d="M6.500 5.500h3.500v2.500H6.500z" fill="#111" /></S>
          </TraySlot>
          <TraySlot $w={2} />
          <Clock>12:03 AM<br />10/20/2021</Clock>
          <TraySlot $w={47}>
            <svg width="25" height="25" viewBox="0 0 25 25">
              <path d="M1 1.500h16v12.500h-4v4l-4-4H1z" fill="#0c0c0c" />
              <path d="M3.500 5h11M3.500 8h11M3.500 11h6" stroke="#d0e2e9" strokeWidth="1.200" />
              <circle cx="16.500" cy="16.500" r="8" fill="#cdd2d4" stroke="#777" strokeWidth=".9" />
              <text x="16.500" y="20.700" fontSize="11.500" textAnchor="middle" fill="#111">1</text>
            </svg>
          </TraySlot>
          <DesktopEdge />
        </Tray>
      </Taskbar>
    </Screen>
  );
}
